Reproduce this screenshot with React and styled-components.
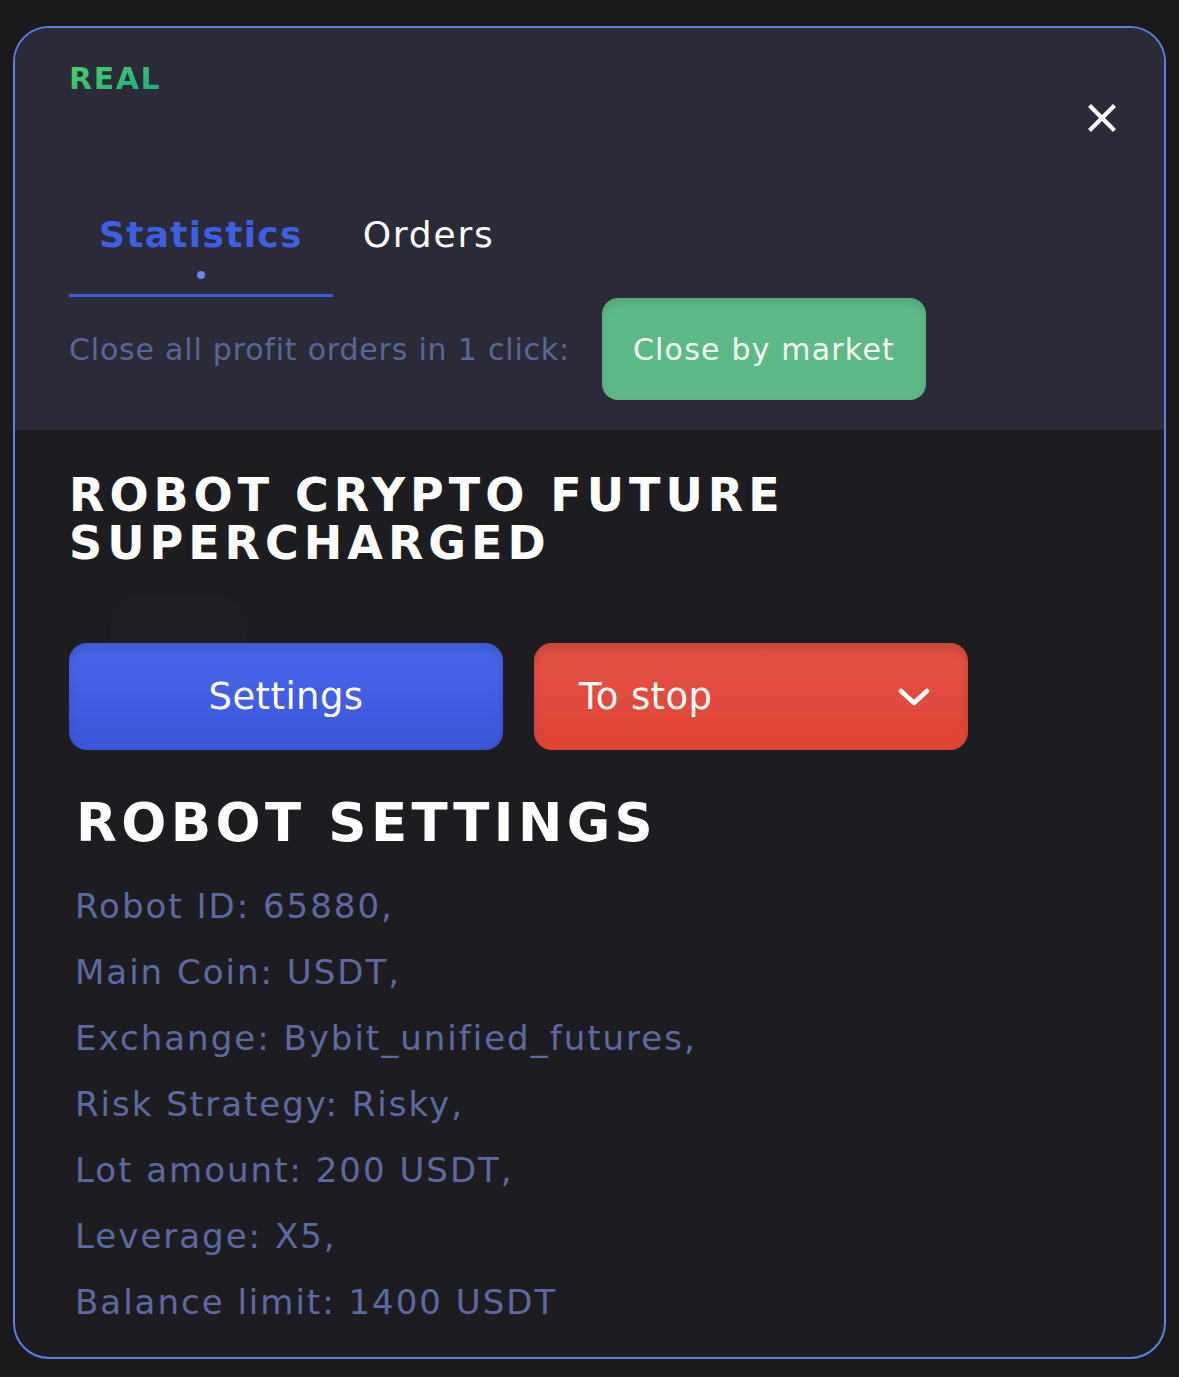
import React from 'react';
import styled, { createGlobalStyle } from 'styled-components';

const GlobalStyle = createGlobalStyle`
  html, body {
    margin: 0;
    padding: 0;
    background: #1a1a1d;
  }
  body {
    font-family: "DejaVu Sans", "Liberation Sans", Arial, sans-serif;
  }
`;

const settings = [
  'Robot ID: 65880,',
  'Main Coin: USDT,',
  'Exchange: Bybit_unified_futures,',
  'Risk Strategy: Risky,',
  'Lot amount: 200 USDT,',
  'Leverage: X5,',
  'Balance limit: 1400 USDT',
];

const App = () => {
  return (
    <Page>
      <GlobalStyle />
      <Card>
        <TopPanel>
          <Header>
            <Badge>REAL</Badge>
            <CloseButton aria-label="close">
              <svg width="28" height="28" viewBox="0 0 28 28">
                <path d="M3 3 L25 25 M25 3 L3 25" stroke="#fff" strokeWidth="4.2" strokeLinecap="square" fill="none" />
              </svg>
            </CloseButton>
          </Header>
          <Tabs>
            <Tab active>
              <TabLabel active>Statistics</TabLabel>
              <Dot active />
            </Tab>
            <Tab>
              <TabLabel>Orders</TabLabel>
              <Dot />
            </Tab>
          </Tabs>
          <CloseRow>
            <Hint>Close all profit orders in 1 click:</Hint>
            <MarketButton>Close by market</MarketButton>
          </CloseRow>
        </TopPanel>

        <BottomPanel>
          <GhostTile aria-hidden="true" />
          <Content>
            <RobotName>
              ROBOT CRYPTO FUTURE
              <br />
              SUPERCHARGED
            </RobotName>
            <Actions>
              <ActionButton tone="blue">Settings</ActionButton>
              <ActionButton tone="red" split>
                <span>To stop</span>
                <svg width="32" height="18" viewBox="0 0 32 18">
                  <polyline points="3,3 16,15 29,3" stroke="#fff" strokeWidth="4.5" strokeLinecap="round" strokeLinejoin="round" fill="none" />
                </svg>
              </ActionButton>
            </Actions>
            <SectionTitle>ROBOT SETTINGS</SectionTitle>
            <SettingsList>
              {settings.map((line) => (
                <SettingsItem key={line}>{line}</SettingsItem>
              ))}
            </SettingsList>
          </Content>
        </BottomPanel>
      </Card>
    </Page>
  );
};

const Page = styled.div`
  box-sizing: border-box;
  min-height: 1377px;
  padding: 26px 13px 18px;
  background: #1a1a1d;
`;

const Card = styled.div`
  box-sizing: border-box;
  height: 1333px;
  border: 2px solid #5f7ee2;
  border-radius: 36px;
  overflow: hidden;
  background: #1d1d21;
  display: flex;
  flex-direction: column;
`;

const TopPanel = styled.div`
  background: #2a2b36;
  padding: 36px 48px 30px 54px;
`;

const Header = styled.div`
  display: flex;
  justify-content: space-between;
  align-items: flex-start;
`;

const Badge = styled.span`
  font-size: 30px;
  line-height: 30px;
  font-weight: 700;
  letter-spacing: 1.6px;
  background: linear-gradient(160deg, #4cd068 0%, #1fa886 100%);
  -webkit-background-clip: text;
  background-clip: text;
  color: transparent;
`;

const CloseButton = styled.button`
  margin-top: 40px;
  width: 28px;
  height: 28px;
  padding: 0;
  border: 0;
  background: none;
  display: flex;
`;

const Tabs = styled.div`
  display: flex;
  margin-top: 85px;
`;

const Tab = styled.div`
  display: flex;
  flex-direction: column;
  align-items: center;
  padding: 0 30px;
  border-bottom: 3px solid ${(p) => (p.active ? '#3e5be2' : 'transparent')};
`;

const TabLabel = styled.span`
  font-size: 36px;
  line-height: 36px;
  font-weight: ${(p) => (p.active ? 700 : 400)};
  letter-spacing: ${(p) => (p.active ? '1.3px' : '1.8px')};
  color: ${(p) => (p.active ? '#3f5ee2' : '#ffffff')};
`;

const Dot = styled.span`
  width: 8px;
  height: 8px;
  margin: 18px 0 15px;
  border-radius: 50%;
  background: #6c84ec;
  visibility: ${(p) => (p.active ? 'visible' : 'hidden')};
`;

const CloseRow = styled.div`
  display: flex;
  align-items: center;
  gap: 32px;
  margin-top: 1px;
`;

const Hint = styled.span`
  font-size: 30px;
  letter-spacing: 0.8px;
  color: #5a6696;
`;

const MarketButton = styled.button`
  height: 102px;
  padding: 0 31px;
  border: 0;
  border-radius: 16px;
  background: #5db988;
  box-shadow: inset 0 5px 8px rgba(0, 0, 0, 0.1);
  color: #f4fff7;
  font-family: inherit;
  font-size: 30px;
  letter-spacing: 1.2px;
`;

const BottomPanel = styled.div`
  position: relative;
  flex: 1;
`;

const GhostTile = styled.div`
  position: absolute;
  left: 95px;
  top: 165px;
  width: 135px;
  height: 95px;
  border-radius: 30px;
  background: rgba(255, 255, 255, 0.01);
  pointer-events: none;
`;

const Content = styled.div`
  position: relative;
  padding: 41px 0 0 54px;
`;

const RobotName = styled.h1`
  margin: 0;
  font-size: 46px;
  line-height: 48px;
  font-weight: 700;
  letter-spacing: 5px;
  color: #ffffff;
`;

const Actions = styled.div`
  display: grid;
  grid-template-columns: 434px 434px;
  gap: 31px;
  margin-top: 76px;
`;

const ActionButton = styled.button`
  height: 107px;
  display: flex;
  align-items: center;
  justify-content: ${(p) => (p.split ? 'space-between' : 'center')};
  padding: ${(p) => (p.split ? '0 38px 0 45px' : '0')};
  border: 0;
  border-radius: 18px;
  font-family: inherit;
  font-size: 37px;
  letter-spacing: 0.4px;
  color: #ffffff;
  background: ${(p) =>
    p.tone === 'red'
      ? 'linear-gradient(180deg, #e45345 0%, #df4436 100%)'
      : 'linear-gradient(180deg, #4a67ec 0%, #3b55d8 100%)'};
  box-shadow: inset 0 6px 10px rgba(0, 0, 0, 0.14);
`;

const SectionTitle = styled.h2`
  margin: 46px 0 0;
  padding-left: 7px;
  font-size: 53px;
  line-height: 53px;
  font-weight: 700;
  letter-spacing: 4.4px;
  color: #ffffff;
`;

const SettingsList = styled.div`
  margin-top: 24px;
  padding-left: 6px;
`;

const SettingsItem = styled.div`
  font-size: 34px;
  line-height: 66px;
  letter-spacing: 2px;
  color: #5d6aa1;
`;

export default App;
